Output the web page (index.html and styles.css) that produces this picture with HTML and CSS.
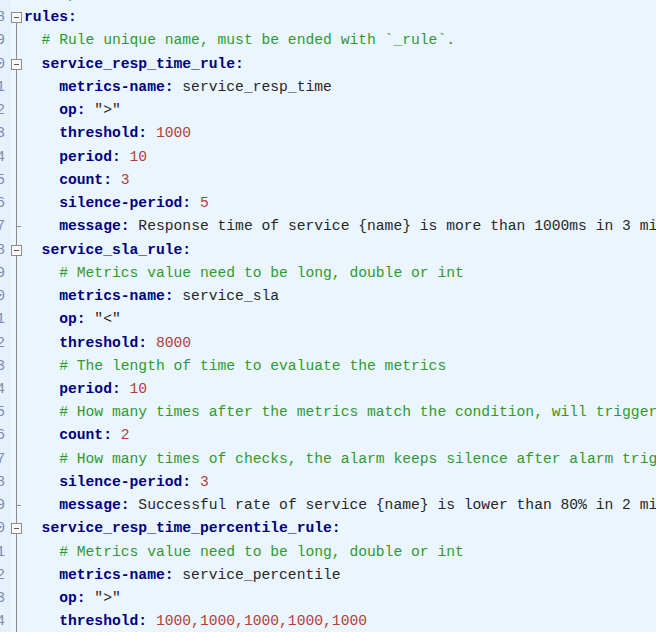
FILE: index.html
```html
<!DOCTYPE html>
<html>
<head>
<meta charset="utf-8">
<link rel="stylesheet" href="styles.css">
</head>
<body>
<div class="editor">
  <div class="row"><span class="num"><span>17</span></span><span class="fold"></span><span class="code"><span class="c"># Sample alarm rules.</span></span></div>
  <div class="row"><span class="num"><span>18</span></span><span class="fold box first"></span><span class="code"><span class="k">rules:</span></span></div>
  <div class="row"><span class="num"><span>19</span></span><span class="fold line"></span><span class="code">  <span class="c"># Rule unique name, must be ended with `_rule`.</span></span></div>
  <div class="row"><span class="num"><span>20</span></span><span class="fold box"></span><span class="code">  <span class="k">service_resp_time_rule:</span></span></div>
  <div class="row"><span class="num"><span>21</span></span><span class="fold line"></span><span class="code">    <span class="k">metrics-name:</span> service_resp_time</span></div>
  <div class="row"><span class="num"><span>22</span></span><span class="fold line"></span><span class="code">    <span class="k">op:</span> "&gt;"</span></div>
  <div class="row"><span class="num"><span>23</span></span><span class="fold line"></span><span class="code">    <span class="k">threshold:</span> <span class="n">1000</span></span></div>
  <div class="row"><span class="num"><span>24</span></span><span class="fold line"></span><span class="code">    <span class="k">period:</span> <span class="n">10</span></span></div>
  <div class="row"><span class="num"><span>25</span></span><span class="fold line"></span><span class="code">    <span class="k">count:</span> <span class="n">3</span></span></div>
  <div class="row"><span class="num"><span>26</span></span><span class="fold line"></span><span class="code">    <span class="k">silence-period:</span> <span class="n">5</span></span></div>
  <div class="row"><span class="num"><span>27</span></span><span class="fold tick"></span><span class="code">    <span class="k">message:</span> Response time of service {name} is more than 1000ms in 3 minutes of last 10 minutes.</span></div>
  <div class="row"><span class="num"><span>28</span></span><span class="fold box"></span><span class="code">  <span class="k">service_sla_rule:</span></span></div>
  <div class="row"><span class="num"><span>29</span></span><span class="fold line"></span><span class="code">    <span class="c"># Metrics value need to be long, double or int</span></span></div>
  <div class="row"><span class="num"><span>30</span></span><span class="fold line"></span><span class="code">    <span class="k">metrics-name:</span> service_sla</span></div>
  <div class="row"><span class="num"><span>31</span></span><span class="fold line"></span><span class="code">    <span class="k">op:</span> "&lt;"</span></div>
  <div class="row"><span class="num"><span>32</span></span><span class="fold line"></span><span class="code">    <span class="k">threshold:</span> <span class="n">8000</span></span></div>
  <div class="row"><span class="num"><span>33</span></span><span class="fold line"></span><span class="code">    <span class="c"># The length of time to evaluate the metrics</span></span></div>
  <div class="row"><span class="num"><span>34</span></span><span class="fold line"></span><span class="code">    <span class="k">period:</span> <span class="n">10</span></span></div>
  <div class="row"><span class="num"><span>35</span></span><span class="fold line"></span><span class="code">    <span class="c"># How many times after the metrics match the condition, will trigger alarm</span></span></div>
  <div class="row"><span class="num"><span>36</span></span><span class="fold line"></span><span class="code">    <span class="k">count:</span> <span class="n">2</span></span></div>
  <div class="row"><span class="num"><span>37</span></span><span class="fold line"></span><span class="code">    <span class="c"># How many times of checks, the alarm keeps silence after alarm triggered, default as same as period.</span></span></div>
  <div class="row"><span class="num"><span>38</span></span><span class="fold line"></span><span class="code">    <span class="k">silence-period:</span> <span class="n">3</span></span></div>
  <div class="row"><span class="num"><span>39</span></span><span class="fold tick"></span><span class="code">    <span class="k">message:</span> Successful rate of service {name} is lower than 80% in 2 minutes of last 10 minutes</span></div>
  <div class="row"><span class="num"><span>40</span></span><span class="fold box"></span><span class="code">  <span class="k">service_resp_time_percentile_rule:</span></span></div>
  <div class="row"><span class="num"><span>41</span></span><span class="fold line"></span><span class="code">    <span class="c"># Metrics value need to be long, double or int</span></span></div>
  <div class="row"><span class="num"><span>42</span></span><span class="fold line"></span><span class="code">    <span class="k">metrics-name:</span> service_percentile</span></div>
  <div class="row"><span class="num"><span>43</span></span><span class="fold line"></span><span class="code">    <span class="k">op:</span> "&gt;"</span></div>
  <div class="row"><span class="num"><span>44</span></span><span class="fold line"></span><span class="code">    <span class="k">threshold:</span> <span class="n">1000,1000,1000,1000,1000</span></span></div>
  <div class="row"><span class="num"><span>45</span></span><span class="fold line"></span><span class="code">    <span class="c"># Calculate the metrics in the given period</span></span></div>
</div>
</body>
</html>
```

FILE: styles.css
```css
html, body {
  margin: 0;
  padding: 0;
  background: #eaf5fe;
  overflow: hidden;
}
body {
  width: 656px;
  height: 632px;
}
.editor {
  margin-top: -17px;
  font-family: "Liberation Mono", "Courier New", monospace;
  font-size: 14.67px;
  line-height: 23.24px;
  color: #262626;
}
.row {
  display: flex;
  height: 23.24px;
  white-space: pre;
}
.num {
  width: 10px;
  flex: none;
  display: flex;
  justify-content: flex-end;
  overflow: hidden;
  padding-right: 6px;
  box-sizing: content-box;
  color: #7b8db0;
  background: #e6f1fb;
  margin-left: -5px;
}
.fold {
  width: 12px;
  flex: none;
  position: relative;
}
.fold.line::before,
.fold.tick::before,
.fold.box:not(.first)::before {
  content: "";
  position: absolute;
  left: 5px;
  top: 0;
  bottom: 0;
  width: 1px;
  background: #8c8c8c;
}
.fold.first::before {
  content: "";
  position: absolute;
  left: 5px;
  top: 12px;
  bottom: 0;
  width: 1px;
  background: #8c8c8c;
}
.fold.tick::after {
  content: "";
  position: absolute;
  left: 6px;
  top: 11px;
  width: 4px;
  height: 1px;
  background: #8c8c8c;
}
.fold.box::after {
  content: "";
  position: absolute;
  left: 0;
  top: 6px;
  width: 9px;
  height: 9px;
  border: 1px solid #8c8c8c;
  background: linear-gradient(#5a5a5a, #5a5a5a) center / 5px 1px no-repeat, #f7f9fb;
}
.code {
  padding-left: 1px;
}
.k {
  color: #000080;
  font-weight: bold;
}
.c {
  color: #2f9a2f;
}
.n {
  color: #b0403c;
}
```
